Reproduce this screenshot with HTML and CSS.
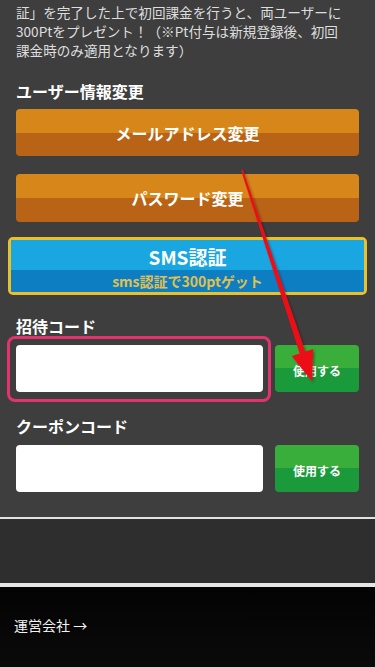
FILE: index.html
```html
<!DOCTYPE html>
<html lang="ja">
<head>
<meta charset="utf-8">
<meta name="viewport" content="width=device-width, initial-scale=1">
<title>ユーザー情報変更</title>
<link rel="stylesheet" href="styles.css">
</head>
<body>
<div class="page">
  <main class="main">
    <p class="intro">証」を完了した上で初回課金を行うと、両ユーザーに<br>300Ptをプレゼント！（※Pt付与は新規登録後、初回<br>課金時のみ適用となります）</p>

    <h2 class="heading heading-first">ユーザー情報変更</h2>
    <a class="btn-orange" href="#">メールアドレス変更</a>
    <a class="btn-orange btn-gap" href="#">パスワード変更</a>

    <a class="sms" href="#">
      <span class="sms-top">SMS認証</span>
      <span class="sms-bottom">sms認証で300ptゲット</span>
    </a>

    <h2 class="heading heading-code">招待コード</h2>
    <div class="code-row">
      <div class="field highlight"><input class="code-input" type="text"></div>
      <button class="btn-green" type="button">使用する</button>
    </div>

    <h2 class="heading heading-code2">クーポンコード</h2>
    <div class="code-row">
      <div class="field"><input class="code-input" type="text"></div>
      <button class="btn-green" type="button">使用する</button>
    </div>
  </main>
  <div class="band"></div>
  <footer class="footer">
    <a class="footer-link" href="#">運営会社 →</a>
  </footer>

  <svg class="annot-arrow" viewBox="0 0 375 667" width="375" height="667" aria-hidden="true">
    <defs>
      <filter id="sh" x="-20%" y="-20%" width="140%" height="140%">
        <feDropShadow dx="1.5" dy="1.5" stdDeviation="1.2" flood-color="#000" flood-opacity="0.35"/>
      </filter>
    </defs>
    <polygon filter="url(#sh)" fill="#ec1119" points="242.9,169.7 305.3,351.6 313.2,348.9 312,381.5 291.8,356.1 299.7,353.4 241.1,170.3"/>
  </svg>
</div>
</body>
</html>
```

FILE: styles.css
```css
* {
  box-sizing: border-box;
}

html, body {
  margin: 0;
  padding: 0;
}

body {
  background: #0a0a0a;
  font-family: "Noto Sans CJK JP", "Noto Sans", sans-serif;
  color: #fff;
}

.page {
  position: relative;
  width: 375px;
  min-height: 667px;
  overflow: hidden;
}

.main {
  background: #3e3e3e;
  padding: 3px 16px 25px;
  border-bottom: 2px solid #e2e2e2;
}

.intro {
  margin: 0;
  font-size: 13.6px;
  line-height: 18.8px;
  color: #dedede;
  white-space: nowrap;
}

.heading {
  margin: 0;
  font-size: 16px;
  line-height: 24px;
  font-weight: 700;
  color: #fff;
}

.heading-first {
  margin-top: 20px;
}

.btn-orange {
  display: flex;
  align-items: center;
  justify-content: center;
  margin-top: 6px;
  height: 47px;
  border-radius: 4px;
  background: linear-gradient(to bottom, #d7861a 0, #d7861a 51%, #b86316 51%, #b86316 100%);
  color: #fff;
  font-size: 16px;
  font-weight: 700;
  text-decoration: none;
}

.btn-gap {
  margin-top: 18px;
  height: 48px;
}

.sms {
  display: flex;
  flex-direction: column;
  margin: 15px -8px 0;
  height: 58px;
  border: 3px solid #e8c22c;
  border-radius: 5px;
  overflow: hidden;
  text-decoration: none;
}

.sms-top {
  flex: 1;
  display: flex;
  align-items: center;
  justify-content: center;
  background: #1aa6e1;
  color: #fff;
  font-size: 19px;
  font-weight: 700;
  padding-top: 3px;
}

.sms-bottom {
  flex: 1;
  display: flex;
  align-items: center;
  justify-content: center;
  background: #0e7ec2;
  color: #e1c14c;
  font-size: 14px;
  font-weight: 700;
  padding-bottom: 1px;
}

.heading-code {
  margin-top: 19px;
}

.heading-code2 {
  margin-top: 22px;
}

.code-row {
  display: flex;
  gap: 12px;
  margin-top: 7px;
  height: 47px;
}

.field {
  position: relative;
  flex: 0 0 247px;
}

.highlight::after {
  content: "";
  position: absolute;
  top: -9px;
  left: -9px;
  right: -8px;
  bottom: -10px;
  border: 3px solid #e3336c;
  border-radius: 8px;
  pointer-events: none;
}

.code-input {
  display: block;
  width: 100%;
  height: 100%;
  border: 0;
  border-radius: 4px;
  background: #fff;
  padding: 0 10px;
  font-size: 16px;
  outline: none;
}

.btn-green {
  flex: 1;
  border: 0;
  border-radius: 4px;
  background: linear-gradient(to bottom, #3aae3b 0, #3aae3b 49%, #1a9a3b 49%, #1a9a3b 100%);
  color: #fff;
  font-family: "Noto Sans CJK JP", "Noto Sans", sans-serif;
  font-size: 12px;
  font-weight: 700;
  padding: 3px 0 0;
}

.band {
  height: 68px;
  background: #2e2e2e;
  border-bottom: 4px solid #e6e6e6;
}

.footer {
  background: linear-gradient(to bottom, #030303, #0a0a0a);
  min-height: 79px;
  padding: 28px 14px 0;
}

.footer-link {
  display: block;
  font-size: 14px;
  line-height: 20px;
  color: #f2f2f2;
  text-decoration: none;
}

.annot-arrow {
  position: absolute;
  top: 0;
  left: 0;
  pointer-events: none;
}
```
